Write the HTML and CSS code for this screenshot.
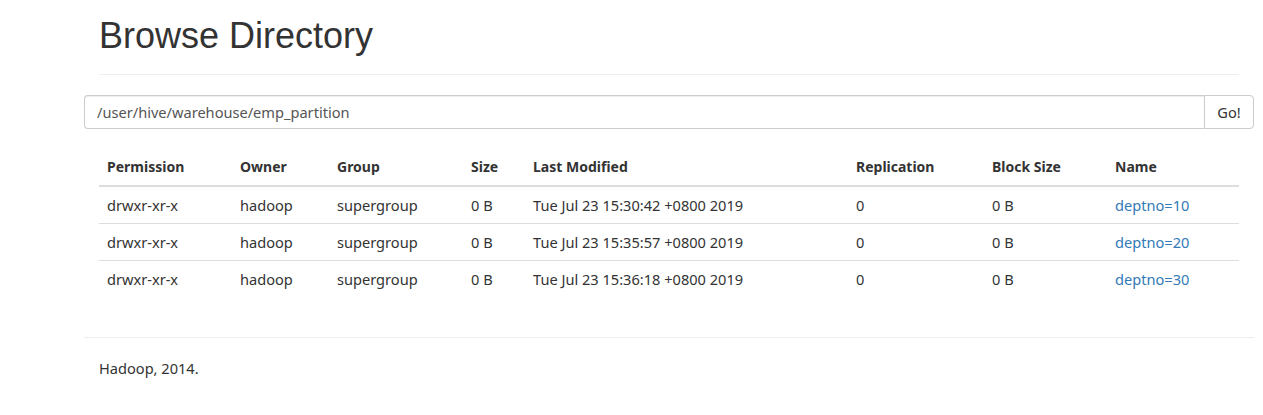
FILE: index.html
```html
<!DOCTYPE html>
<html>
<head>
<meta charset="utf-8">
<link rel="stylesheet" href="styles.css">
</head>
<body>
<div class="container">
  <div class="page-header"><h1>Browse Directory</h1></div>
  <div class="input-group">
    <input class="form-control" type="text" value="/user/hive/warehouse/emp_partition">
    <button class="btn">Go!</button>
  </div>
  <div class="table-wrap">
    <table class="table">
      <thead>
        <tr>
          <th class="c-perm">Permission</th>
          <th class="c-owner">Owner</th>
          <th class="c-group">Group</th>
          <th class="c-size">Size</th>
          <th class="c-mod">Last Modified</th>
          <th class="c-rep">Replication</th>
          <th class="c-block">Block Size</th>
          <th class="c-name">Name</th>
        </tr>
      </thead>
      <tbody>
        <tr>
          <td>drwxr-xr-x</td><td>hadoop</td><td>supergroup</td><td>0 B</td>
          <td>Tue Jul 23 15:30:42 +0800 2019</td><td>0</td><td>0 B</td>
          <td><a href="#">deptno=10</a></td>
        </tr>
        <tr>
          <td>drwxr-xr-x</td><td>hadoop</td><td>supergroup</td><td>0 B</td>
          <td>Tue Jul 23 15:35:57 +0800 2019</td><td>0</td><td>0 B</td>
          <td><a href="#">deptno=20</a></td>
        </tr>
        <tr>
          <td>drwxr-xr-x</td><td>hadoop</td><td>supergroup</td><td>0 B</td>
          <td>Tue Jul 23 15:36:18 +0800 2019</td><td>0</td><td>0 B</td>
          <td><a href="#">deptno=30</a></td>
        </tr>
      </tbody>
    </table>
  </div>
  <hr class="footer-rule">
  <div class="footer">Hadoop, 2014.</div>
</div>
</body>
</html>
```

FILE: styles.css
```css
* { box-sizing: border-box; }
html, body { margin: 0; padding: 0; background: #fff; }
body {
  font-family: "Noto Sans", "Open Sans", sans-serif;
  font-size: 14.6px;
  line-height: 20px;
  color: #333;
}
.container {
  width: 1170px;
  margin: 0 0 0 84px;
}
.page-header {
  margin: 0 15px 20px;
  padding: 16px 0 0;
  height: 75px;
  border-bottom: 1px solid #eee;
}
.page-header h1 {
  margin: 0;
  font-family: "Liberation Sans", Arial, sans-serif;
  font-weight: 500;
  font-size: 36px;
  line-height: 40px;
  color: #333;
}
.input-group {
  display: flex;
  height: 34px;
  margin-bottom: 20px;
}
.form-control {
  flex: 1;
  height: 34px;
  padding: 6px 12px;
  font-family: "Noto Sans", sans-serif;
  font-size: 14.6px;
  color: #555;
  border: 1px solid #ccc;
  border-right: none;
  border-radius: 4px 0 0 4px;
  box-shadow: inset 0 1px 1px rgba(0,0,0,.075);
  outline: none;
}
.btn {
  width: 50px;
  height: 34px;
  padding: 6px 0;
  font-family: "Noto Sans", sans-serif;
  font-size: 14.6px;
  color: #333;
  background: #fff;
  border: 1px solid #ccc;
  border-radius: 0 4px 4px 0;
}
.table-wrap { padding: 0 15px; }
.table {
  width: 100%;
  border-collapse: collapse;
  border-spacing: 0;
}
.table th, .table td {
  padding: 8px;
  text-align: left;
  vertical-align: top;
  line-height: 20px;
}
.table th {
  font-weight: 700;
  font-size: 14px;
  border-bottom: 2px solid #ddd;
}
.table td { border-top: 1px solid #ddd; }
.table tbody tr:first-child td { border-top: none; }
.c-perm { width: 133px; }
.c-owner { width: 97px; }
.c-group { width: 134px; }
.c-size { width: 62px; }
.c-mod { width: 323px; }
.c-rep { width: 136px; }
.c-block { width: 123px; }
.c-name { width: 132px; }
a { color: #337ab7; text-decoration: none; }
.footer-rule {
  margin: 40px 0 0;
  border: 0;
  border-top: 1px solid #eee;
}
.footer {
  padding: 20px 15px;
}
```
